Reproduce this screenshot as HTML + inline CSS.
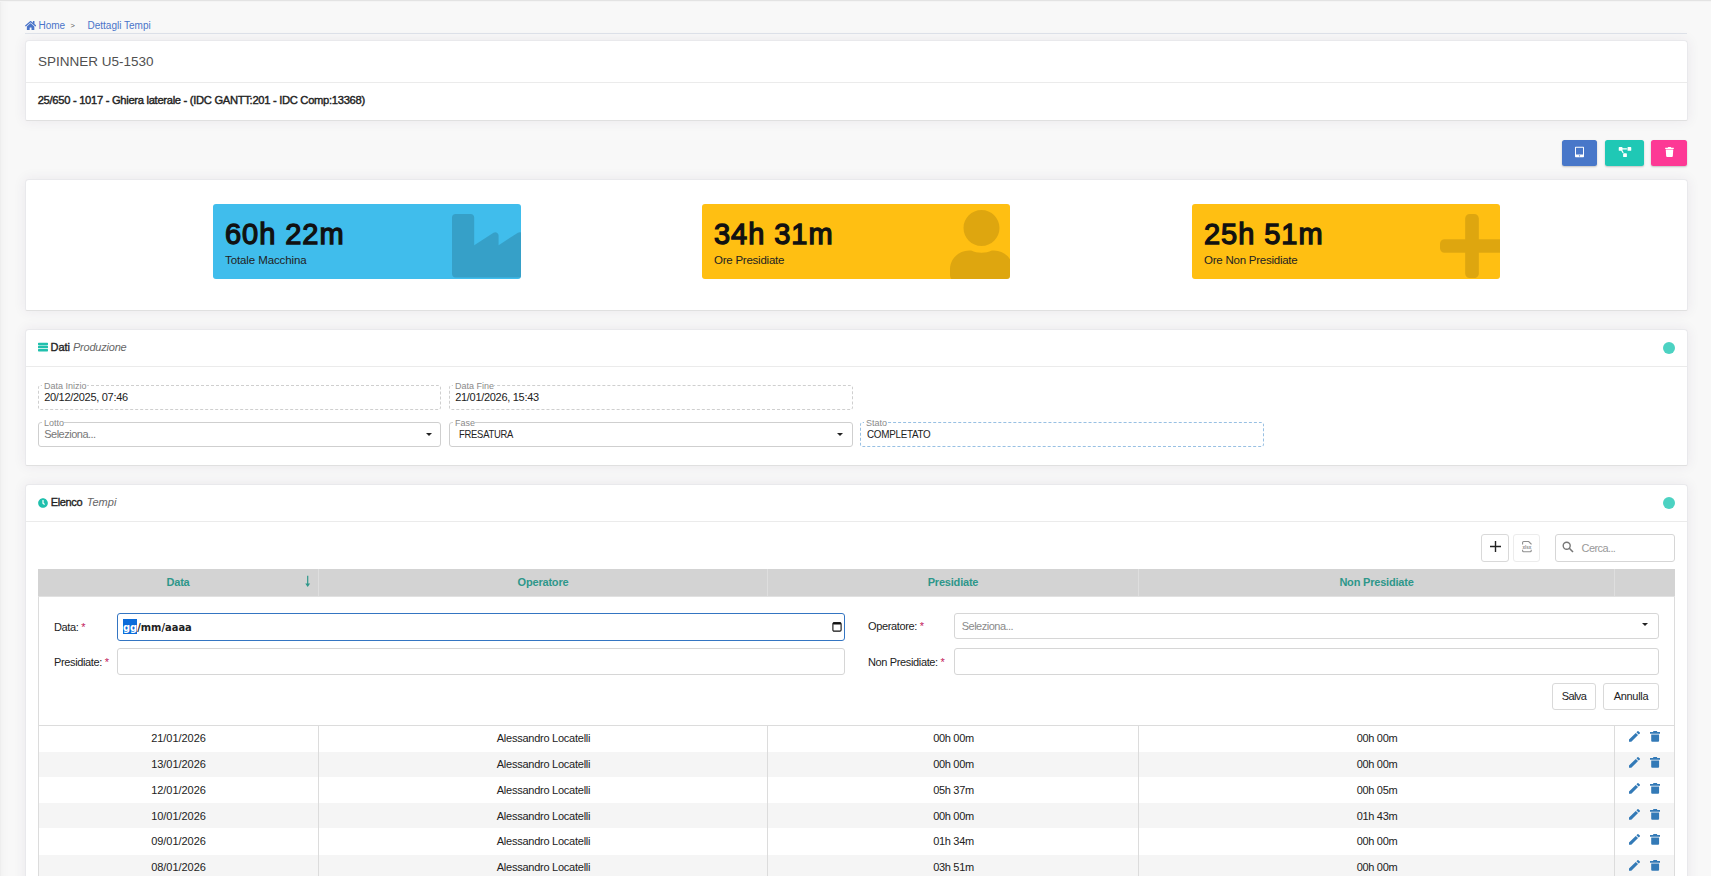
<!DOCTYPE html>
<html lang="it">
<head>
<meta charset="utf-8">
<title>Dettagli Tempi</title>
<style>
*{box-sizing:border-box;margin:0;padding:0}
html,body{width:1711px;height:876px;overflow:hidden;background:#f8f8f8}
body{font-family:"Liberation Sans",sans-serif;font-size:11px;color:#333;position:relative}
#page{position:absolute;left:0;top:0;width:1711px;height:876px;overflow:hidden;background:#f8f8f8;box-shadow:inset 12px 0 12px -12px rgba(0,0,0,.05)}
#page:after{content:"";position:absolute;left:0;top:0;width:1711px;height:2px;background:linear-gradient(#e3e3e3 0,#e3e3e3 50%,#f4f4f4 50%,#f4f4f4 100%)}
#page:before{content:"";position:absolute;left:0;top:0;width:1px;height:876px;background:#eeeeee}
.abs{position:absolute}
.card{position:absolute;left:25px;width:1663px;background:#fff;border:1px solid #e9e9ec;border-bottom-color:#e0e0e0;border-radius:4px 4px 2px 2px;box-shadow:0 0 13px 0 rgba(62,44,90,.08)}
.hline{position:absolute;left:0;right:0;height:1px;background:#ebebeb}
.t{position:absolute;white-space:nowrap;line-height:14px}
/* breadcrumb */
.bc{color:#4a74c9;font-size:10px}
/* stat */
.stat{position:absolute;top:24px;width:308px;height:75px;border-radius:3px;overflow:hidden}
.stat .num{position:absolute;left:12px;top:12px;font-size:29px;line-height:36px;font-weight:normal;-webkit-text-stroke:1.3px #111;color:#111;white-space:nowrap;letter-spacing:.95px}
.stat .lab{position:absolute;left:12px;top:48.7px;font-size:11.5px;line-height:14px;color:#222;white-space:nowrap;letter-spacing:-.24px}
/* fieldset like */
.fs{position:absolute;height:25px;border:1px solid #cfcfcf;border-radius:3px}
.fs.dash{border-style:dashed}
.fs .lg{position:absolute;left:3px;top:-5.500px;background:#fff;padding:0 0 0 2px;letter-spacing:0;font-size:9px;line-height:11px;color:#8a8a8a;white-space:nowrap}
.fs .v{position:absolute;left:5.200px;top:5px;font-size:11px;line-height:13px;color:#222;white-space:nowrap;letter-spacing:-.3px}
.arrow{position:absolute;width:0;height:0;border-left:3.5px solid transparent;border-right:3.5px solid transparent;border-top:4px solid #222}
/* grid */
.th{position:absolute;top:0;height:27px;line-height:27px;text-align:center;font-weight:bold;color:#2e978a;font-size:11px;letter-spacing:-.2px;border-right:1px solid #dedede}
.inp{position:absolute;background:#fff;border:1px solid #d6d6d6;border-radius:3px}
.lbl{position:absolute;font-size:11px;line-height:14px;color:#222;white-space:nowrap;letter-spacing:-.36px}
.lbl b{color:#c2185b;font-weight:normal}
.btn{position:absolute;background:#fff;border:1px solid #d9d9d9;border-radius:3px;text-align:center;font-size:11px;color:#222}
.row{position:absolute;left:0;width:1635px}
.row.alt{background:#f5f5f5}
.row span{position:absolute;top:0;text-align:center;font-size:11px;color:#222;white-space:nowrap}
.vl{position:absolute;width:1px;background:#dcdcdc}
</style>
</head>
<body>
<div id="page">

<!-- breadcrumb -->
<svg class="abs" style="left:24.800px;top:20.800px" width="11.200" height="9" viewBox="0 32 576 448" preserveAspectRatio="none"><path fill="#4a74c9" d="M280.4 148.3L96 300.1V464a16 16 0 0 0 16 16l112.1-.3a16 16 0 0 0 15.900-16V368a16 16 0 0 1 16-16h64a16 16 0 0 1 16 16v95.600a16 16 0 0 0 16 16.100L464 480a16 16 0 0 0 16-16V300L295.700 148.300a12.200 12.200 0 0 0-15.300 0zM571.600 251.500L488 182.600V44.100a12 12 0 0 0-12-12h-56a12 12 0 0 0-12 12v72.600L318.500 43a48 48 0 0 0-61 0L4.300 251.500a12 12 0 0 0-1.600 16.900l25.500 31a12 12 0 0 0 16.900 1.600l235.200-193.700a12.200 12.200 0 0 1 15.300 0L530.900 301a12 12 0 0 0 16.900-1.600l25.500-31a12 12 0 0 0-1.700-16.900z"/></svg>
<div class="t bc" style="left:38.500px;top:19px">Home</div>
<div class="t" style="left:70.500px;top:19px;font-size:7.500px;color:#555">&gt;</div>
<div class="t bc" style="left:87.500px;top:19px">Dettagli Tempi</div>
<div class="abs" style="left:25px;top:33px;width:1662px;height:1px;background:#dfe3ea"></div>

<!-- card 1 -->
<div class="card" style="top:40px;height:81px">
  <div class="t" style="left:12px;top:11.700px;font-size:13.500px;line-height:18px;color:#505050">SPINNER U5-1530</div>
  <div class="hline" style="top:41px"></div>
  <div class="t" style="left:11.700px;top:52px;font-size:11.200px;letter-spacing:-.3px;-webkit-text-stroke:.4px #222;color:#222">25/650 - 1017 - Ghiera laterale - (IDC GANTT:201 - IDC Comp:13368)</div>
</div>

<!-- action buttons -->
<div class="abs" style="left:1562px;top:140px;width:35px;height:26px;background:#4877c9;border-radius:2.500px;box-shadow:0 1px 2px rgba(0,0,0,.22)">
  <svg class="abs" style="left:13px;top:6px" width="9" height="12" viewBox="0 0 448 512"><path fill="#fff" d="M400 0H48C21.500 0 0 21.500 0 48v416c0 26.500 21.500 48 48 48h352c26.500 0 48-21.500 48-48V48c0-26.500-21.500-48-48-48zM224 480c-17.700 0-32-14.300-32-32s14.300-32 32-32 32 14.300 32 32-14.300 32-32 32zm176-108c0 6.600-5.400 12-12 12H60c-6.600 0-12-5.400-12-12V60c0-6.600 5.400-12 12-12h328c6.600 0 12 5.400 12 12v312z"/></svg>
</div>
<div class="abs" style="left:1605px;top:140px;width:39px;height:26px;background:#1fc8b5;border-radius:2.500px;box-shadow:0 1px 2px rgba(0,0,0,.22)">
  <svg class="abs" style="left:13px;top:7px" width="14" height="10" viewBox="0 0 640 512"><path fill="#fff" d="M384 320H256c-17.700 0-32 14.300-32 32v128c0 17.700 14.300 32 32 32h128c17.700 0 32-14.300 32-32V352c0-17.700-14.300-32-32-32zM192 32c0-17.700-14.300-32-32-32H32C14.300 0 0 14.300 0 32v128c0 17.700 14.300 32 32 32h95.700l73.200 128C212 301 232.400 288 256 288h.3L192 175.500V128h224V64H192V32zM608 0H480c-17.700 0-32 14.300-32 32v128c0 17.700 14.300 32 32 32h128c17.700 0 32-14.300 32-32V32c0-17.700-14.300-32-32-32z"/></svg>
</div>
<div class="abs" style="left:1651px;top:140px;width:36px;height:26px;background:#fd3995;border-radius:2.500px;box-shadow:0 1px 2px rgba(0,0,0,.22)">
  <svg class="abs" style="left:13.500px;top:7px" width="9" height="10" viewBox="0 0 448 512"><path fill="#fff" d="M432 32H312l-9.400-18.700A24 24 0 0 0 281.100 0H166.800a23.700 23.700 0 0 0-21.400 13.300L136 32H16A16 16 0 0 0 0 48v32a16 16 0 0 0 16 16h416a16 16 0 0 0 16-16V48a16 16 0 0 0-16-16zM53.200 467a48 48 0 0 0 47.900 45h245.800a48 48 0 0 0 47.900-45L416 128H32z"/></svg>
</div>

<!-- card 2 : stats -->
<div class="card" style="top:179px;height:132px">
  <div class="stat" style="left:187px;background:#40bdec">
    <svg class="abs" style="left:239px;top:10px" width="71" height="63.500" viewBox="0 32 512 448" preserveAspectRatio="none"><path fill="#000" fill-opacity=".15" d="M475.100 163.800L336 252.300v-68.300c0-18.900-20.900-30.400-36.900-20.200L160 252.300V56c0-13.300-10.700-24-24-24H24C10.700 32 0 42.700 0 56v400c0 13.300 10.700 24 24 24h464c13.300 0 24-10.700 24-24V184c0-18.900-20.900-30.400-36.900-20.200z"/></svg>
    <div class="num">60h 22m</div><div class="lab" style="letter-spacing:-.1px">Totale Macchina</div>
  </div>
  <div class="stat" style="left:676px;background:#ffbf12">
    <svg class="abs" style="left:248.300px;top:6px" width="63" height="72" viewBox="0 0 448 512" preserveAspectRatio="none"><path fill="#000" fill-opacity=".13" d="M224 256c70.700 0 128-57.300 128-128S294.700 0 224 0 96 57.300 96 128s57.300 128 128 128zm89.600 32h-16.700c-22.200 10.200-46.900 16-72.900 16s-50.600-5.800-72.900-16h-16.700C60.200 288 0 348.200 0 422.400V464c0 26.500 21.500 48 48 48h352c26.500 0 48-21.500 48-48v-41.600c0-74.200-60.200-134.400-134.400-134.400z"/></svg>
    <div class="num">34h 31m</div><div class="lab">Ore Presidiate</div>
  </div>
  <div class="stat" style="left:1166px;background:#ffbf12">
    <svg class="abs" style="left:248px;top:10px" width="64" height="64" viewBox="0 0 448 448"><path fill="#000" fill-opacity=".13" d="M416 176H272V32c0-17.700-14.300-32-32-32h-32c-17.700 0-32 14.300-32 32v144H32c-17.700 0-32 14.300-32 32v32c0 17.700 14.300 32 32 32h144v144c0 17.700 14.300 32 32 32h32c17.700 0 32-14.300 32-32V272h144c17.700 0 32-14.300 32-32v-32c0-17.700-14.300-32-32-32z"/></svg>
    <div class="num">25h 51m</div><div class="lab">Ore Non Presidiate</div>
  </div>
</div>

<!-- card 3 : dati produzione -->
<div class="card" style="top:329px;height:137px">
  <svg class="abs" style="left:11.700px;top:12.200px" width="10" height="10" viewBox="0 0 512 512"><path fill="#20c0ad" d="M480 160H32c-17.700 0-32-14.300-32-32V64c0-17.700 14.300-32 32-32h448c17.700 0 32 14.300 32 32v64c0 17.700-14.300 32-32 32zm0 160H32c-17.700 0-32-14.300-32-32v-64c0-17.700 14.300-32 32-32h448c17.700 0 32 14.300 32 32v64c0 17.700-14.300 32-32 32zm0 160H32c-17.700 0-32-14.300-32-32v-64c0-17.700 14.300-32 32-32h448c17.700 0 32 14.300 32 32v64c0 17.700-14.300 32-32 32z"/></svg>
  <div class="t" style="left:24.500px;top:10.200px;font-size:11px;-webkit-text-stroke:.35px #222;letter-spacing:-.05px;color:#222">Dati</div>
  <div class="t" style="left:47px;top:10.200px;font-size:11px;font-style:italic;letter-spacing:-.22px;color:#666">Produzione</div>
  <div class="abs" style="left:1637px;top:12px;width:12px;height:12px;border-radius:50%;background:#4cd2c2"></div>
  <div class="hline" style="top:36px"></div>

  <div class="fs dash" style="left:12px;top:55px;width:403px"><span class="lg">Data Inizio</span><span class="v">20/12/2025, 07:46</span></div>
  <div class="fs dash" style="left:423px;top:55px;width:404px"><span class="lg">Data Fine</span><span class="v">21/01/2026, 15:43</span></div>
  <div class="fs" style="left:12px;top:92px;width:403px"><span class="lg">Lotto</span><span class="v" style="color:#777;letter-spacing:-.5px">Seleziona...</span><i class="arrow" style="left:387px;top:9.500px;border-top-width:3.500px"></i></div>
  <div class="fs" style="left:423px;top:92px;width:404px"><span class="lg">Fase</span><span class="v" style="left:8.700px;transform:scaleX(.858);transform-origin:0 50%">FRESATURA</span><i class="arrow" style="left:387px;top:9.500px;border-top-width:3.500px"></i></div>
  <div class="fs dash" style="left:834px;top:92px;width:404px;border-color:#98c0e3"><span class="lg">Stato</span><span class="v" style="left:5.700px;transform:scaleX(.894);transform-origin:0 50%">COMPLETATO</span></div>
</div>

<!-- card 4 : elenco tempi -->
<div class="card" style="top:484px;height:420px">
  <svg class="abs" style="left:11.700px;top:12.600px" width="10" height="10" viewBox="0 0 512 512"><path fill="#20c0ad" d="M256 8C119 8 8 119 8 256s111 248 248 248 248-111 248-248S393 8 256 8zm92.500 313l-20 25a16 16 0 0 1-22.500 2.500l-67-49.700a40 40 0 0 1-15-31.200V112a16 16 0 0 1 16-16h32a16 16 0 0 1 16 16v144l58 42.500a16 16 0 0 1 2.500 22.500z"/></svg>
  <div class="t" style="left:24.700px;top:9.800px;font-size:11px;-webkit-text-stroke:.35px #222;letter-spacing:-.35px;color:#222">Elenco</div>
  <div class="t" style="left:60.800px;top:9.800px;font-size:11px;font-style:italic;color:#666">Tempi</div>
  <div class="abs" style="left:1637px;top:12px;width:12px;height:12px;border-radius:50%;background:#4cd2c2"></div>
  <div class="hline" style="top:36px"></div>

  <!-- toolbar -->
  <div class="btn" style="left:1455px;top:49px;width:28px;height:28px">
    <svg class="abs" style="left:8px;top:6.300px" width="11" height="11" viewBox="0 0 11 11"><path d="M5.500 0v11M0 5.500h11" stroke="#222" stroke-width="1.400" fill="none"/></svg>
  </div>
  <div class="btn" style="left:1487px;top:49px;width:27px;height:28px;border-color:#ececec">
    <svg class="abs" style="left:6px;top:4.300px" width="14" height="15" viewBox="0 0 14 15"><path d="M2.600 5.500V3.600Q2.600 2.500 3.700 2.500H8.700L11.200 5V5.500M2.600 10.700v1q0 1 1 1h6.600q1 0 1-1v-1" fill="none" stroke="#8e8e8e" stroke-width="1.100"/><text x="6.900" y="9.600" text-anchor="middle" font-family="Liberation Sans, sans-serif" font-weight="bold" font-size="4.600" fill="#8e8e8e">xlsx</text></svg>
  </div>
  <div class="inp" style="left:1529px;top:49px;width:120px;height:28px">
    <svg class="abs" style="left:6.400px;top:5.700px" width="12" height="12" viewBox="0 0 12 12"><circle cx="4.700" cy="4.700" r="3.500" fill="none" stroke="#777" stroke-width="1.400"/><path d="M7.300 7.300L11 11" stroke="#777" stroke-width="1.600"/></svg>
    <div class="t" style="left:25.600px;top:5.600px;font-size:11px;letter-spacing:-.6px;color:#999">Cerca...</div>
  </div>

  <!-- grid -->
  <div class="abs" id="grid" style="left:12px;top:84px;width:1637px;height:340px;border-left:1px solid #dcdcdc;border-right:1px solid #dcdcdc">
    <div class="abs" style="left:-1px;top:0;width:1637px;height:28px;background:#d3d3d3;border-bottom:1px solid #e1e1e1">
      <div class="th" style="left:0;width:281px">Data<span style="position:absolute;left:262.600px;top:4px;width:14px;height:18px"><svg style="position:absolute;left:0;top:0" width="14" height="18" viewBox="0 0 14 18"><path d="M6.700 2.800v9.500" stroke="#2e978a" stroke-width="1.200" fill="none"/><path d="M4.300 10.600h4.800l-2.400 3.500z" fill="#2e978a"/></svg></span></div>
      <div class="th" style="left:281px;width:449px">Operatore</div>
      <div class="th" style="left:730px;width:371px">Presidiate</div>
      <div class="th" style="left:1101px;width:476px">Non Presidiate</div>
    </div>

    <!-- edit form -->
    <div class="lbl" style="left:15px;top:51px">Data: <b>*</b></div>
    <div class="inp" style="left:78px;top:44px;width:728px;height:28px;border:1.500px solid #3475c2">
      <div class="abs" style="left:5px;top:4.800px;width:13.800px;height:15px;background:#0b6cda"></div><div class="t" style="left:5px;top:5.700px;font-family:'DejaVu Sans Condensed','DejaVu Sans','Liberation Sans',sans-serif;font-weight:bold;font-size:11px;line-height:15px;color:#222"><span style="color:#fff">gg</span>/mm/aaaa</div>
      <svg class="abs" style="right:2px;top:7px" width="10" height="11" viewBox="0 0 10 11"><rect x=".9" y="1.700" width="8.200" height="8.400" rx="1.200" fill="none" stroke="#111" stroke-width="1.100"/><rect x=".9" y="1.200" width="8.200" height="2.400" rx=".8" fill="#111"/></svg>
    </div>
    <div class="lbl" style="left:829px;top:50px">Operatore: <b>*</b></div>
    <div class="inp" style="left:915px;top:44px;width:705px;height:26px">
      <div class="t" style="left:6.700px;top:4.500px;font-size:11px;letter-spacing:-.5px;color:#8a8a8a">Seleziona...</div>
      <i class="arrow" style="right:9.600px;top:9px;border-left-width:3.300px;border-right-width:3.300px;border-top-width:3.500px"></i>
    </div>
    <div class="lbl" style="left:15px;top:86px">Presidiate: <b>*</b></div>
    <div class="inp" style="left:78px;top:79px;width:728px;height:27px"></div>
    <div class="lbl" style="left:829px;top:86px">Non Presidiate: <b>*</b></div>
    <div class="inp" style="left:915px;top:79px;width:705px;height:27px"></div>
    <div class="btn" style="left:1513px;top:114px;width:44px;height:27px;line-height:25px;letter-spacing:-.65px">Salva</div>
    <div class="btn" style="left:1564px;top:114px;width:56px;height:27px;line-height:25px;letter-spacing:-.3px">Annulla</div>
    <div class="abs" style="left:0;top:156px;width:1635px;height:1px;background:#dcdcdc"></div>

    <!-- rows -->
    <div id="rows" class="abs" style="left:0;top:157px;width:1635px;height:200px">
<div class="row" style="top:0px;height:26px;line-height:24px"><span style="left:-.5px;width:280px;letter-spacing:-.05px">21/01/2026</span><span style="left:280px;width:449px;letter-spacing:-.25px">Alessandro Locatelli</span><span style="left:729px;width:371px;letter-spacing:-.3px">00h 00m</span><span style="left:1100px;width:476px;letter-spacing:-.3px">00h 00m</span><svg class="abs" style="left:1590.100px;top:5px" width="11" height="10.700" viewBox="3 3 18 18" preserveAspectRatio="none"><path fill="#337ab7" d="M3 17.250V21h3.750L17.810 9.940l-3.750-3.750L3 17.250zM20.710 7.040a1 1 0 0 0 0-1.410l-2.340-2.340a1 1 0 0 0-1.410 0l-1.830 1.830 3.750 3.750 1.830-1.830z"/></svg><svg class="abs" style="left:1610.900px;top:5px" width="10.300" height="10.700" viewBox="0 0 10.300 10.700"><path fill="#337ab7" d="M3.200 0h3.900v1.100h3.200v1.700H0V1.100h3.200zM1.200 3.400h7.900v6.300q0 1-1 1H2.200q-1 0-1-1z"/></svg></div>
<div class="row alt" style="top:26px;height:25px;line-height:25px"><span style="left:-.5px;width:280px;letter-spacing:-.05px">13/01/2026</span><span style="left:280px;width:449px;letter-spacing:-.25px">Alessandro Locatelli</span><span style="left:729px;width:371px;letter-spacing:-.3px">00h 00m</span><span style="left:1100px;width:476px;letter-spacing:-.3px">00h 00m</span><svg class="abs" style="left:1590.100px;top:5px" width="11" height="10.700" viewBox="3 3 18 18" preserveAspectRatio="none"><path fill="#337ab7" d="M3 17.250V21h3.750L17.810 9.940l-3.750-3.750L3 17.250zM20.710 7.040a1 1 0 0 0 0-1.410l-2.340-2.340a1 1 0 0 0-1.410 0l-1.830 1.830 3.750 3.750 1.830-1.830z"/></svg><svg class="abs" style="left:1610.900px;top:5px" width="10.300" height="10.700" viewBox="0 0 10.300 10.700"><path fill="#337ab7" d="M3.200 0h3.900v1.100h3.200v1.700H0V1.100h3.200zM1.200 3.400h7.900v6.300q0 1-1 1H2.200q-1 0-1-1z"/></svg></div>
<div class="row" style="top:51px;height:26px;line-height:26px"><span style="left:-.5px;width:280px;letter-spacing:-.05px">12/01/2026</span><span style="left:280px;width:449px;letter-spacing:-.25px">Alessandro Locatelli</span><span style="left:729px;width:371px;letter-spacing:-.3px">05h 37m</span><span style="left:1100px;width:476px;letter-spacing:-.3px">00h 05m</span><svg class="abs" style="left:1590.100px;top:6px" width="11" height="10.700" viewBox="3 3 18 18" preserveAspectRatio="none"><path fill="#337ab7" d="M3 17.250V21h3.750L17.810 9.940l-3.750-3.750L3 17.250zM20.710 7.040a1 1 0 0 0 0-1.410l-2.340-2.340a1 1 0 0 0-1.410 0l-1.830 1.830 3.750 3.750 1.830-1.830z"/></svg><svg class="abs" style="left:1610.900px;top:6px" width="10.300" height="10.700" viewBox="0 0 10.300 10.700"><path fill="#337ab7" d="M3.200 0h3.900v1.100h3.200v1.700H0V1.100h3.200zM1.200 3.400h7.900v6.300q0 1-1 1H2.200q-1 0-1-1z"/></svg></div>
<div class="row alt" style="top:77px;height:25px;line-height:27px"><span style="left:-.5px;width:280px;letter-spacing:-.05px">10/01/2026</span><span style="left:280px;width:449px;letter-spacing:-.25px">Alessandro Locatelli</span><span style="left:729px;width:371px;letter-spacing:-.3px">00h 00m</span><span style="left:1100px;width:476px;letter-spacing:-.3px">01h 43m</span><svg class="abs" style="left:1590.100px;top:6px" width="11" height="10.700" viewBox="3 3 18 18" preserveAspectRatio="none"><path fill="#337ab7" d="M3 17.250V21h3.750L17.810 9.940l-3.750-3.750L3 17.250zM20.710 7.040a1 1 0 0 0 0-1.410l-2.340-2.340a1 1 0 0 0-1.410 0l-1.830 1.830 3.750 3.750 1.830-1.830z"/></svg><svg class="abs" style="left:1610.900px;top:6px" width="10.300" height="10.700" viewBox="0 0 10.300 10.700"><path fill="#337ab7" d="M3.200 0h3.900v1.100h3.200v1.700H0V1.100h3.200zM1.200 3.400h7.900v6.300q0 1-1 1H2.200q-1 0-1-1z"/></svg></div>
<div class="row" style="top:102px;height:27px;line-height:27px"><span style="left:-.5px;width:280px;letter-spacing:-.05px">09/01/2026</span><span style="left:280px;width:449px;letter-spacing:-.25px">Alessandro Locatelli</span><span style="left:729px;width:371px;letter-spacing:-.3px">01h 34m</span><span style="left:1100px;width:476px;letter-spacing:-.3px">00h 00m</span><svg class="abs" style="left:1590.100px;top:6px" width="11" height="10.700" viewBox="3 3 18 18" preserveAspectRatio="none"><path fill="#337ab7" d="M3 17.250V21h3.750L17.810 9.940l-3.750-3.750L3 17.250zM20.710 7.040a1 1 0 0 0 0-1.410l-2.340-2.340a1 1 0 0 0-1.410 0l-1.830 1.830 3.750 3.750 1.830-1.830z"/></svg><svg class="abs" style="left:1610.900px;top:6px" width="10.300" height="10.700" viewBox="0 0 10.300 10.700"><path fill="#337ab7" d="M3.200 0h3.900v1.100h3.200v1.700H0V1.100h3.200zM1.200 3.400h7.900v6.300q0 1-1 1H2.200q-1 0-1-1z"/></svg></div>
<div class="row alt" style="top:129px;height:26px;line-height:24px"><span style="left:-.5px;width:280px;letter-spacing:-.05px">08/01/2026</span><span style="left:280px;width:449px;letter-spacing:-.25px">Alessandro Locatelli</span><span style="left:729px;width:371px;letter-spacing:-.3px">03h 51m</span><span style="left:1100px;width:476px;letter-spacing:-.3px">00h 00m</span><svg class="abs" style="left:1590.100px;top:5px" width="11" height="10.700" viewBox="3 3 18 18" preserveAspectRatio="none"><path fill="#337ab7" d="M3 17.250V21h3.750L17.810 9.940l-3.750-3.750L3 17.250zM20.710 7.040a1 1 0 0 0 0-1.410l-2.340-2.340a1 1 0 0 0-1.410 0l-1.830 1.830 3.750 3.750 1.830-1.830z"/></svg><svg class="abs" style="left:1610.900px;top:5px" width="10.300" height="10.700" viewBox="0 0 10.300 10.700"><path fill="#337ab7" d="M3.200 0h3.900v1.100h3.200v1.700H0V1.100h3.200zM1.200 3.400h7.900v6.300q0 1-1 1H2.200q-1 0-1-1z"/></svg></div>
<div class="vl" style="left:279px;top:0;height:200px"></div>
<div class="vl" style="left:728px;top:0;height:200px"></div>
<div class="vl" style="left:1099px;top:0;height:200px"></div>
<div class="vl" style="left:1575px;top:0;height:200px"></div>
    </div>
  </div>
</div>

</div>
</body>
</html>
